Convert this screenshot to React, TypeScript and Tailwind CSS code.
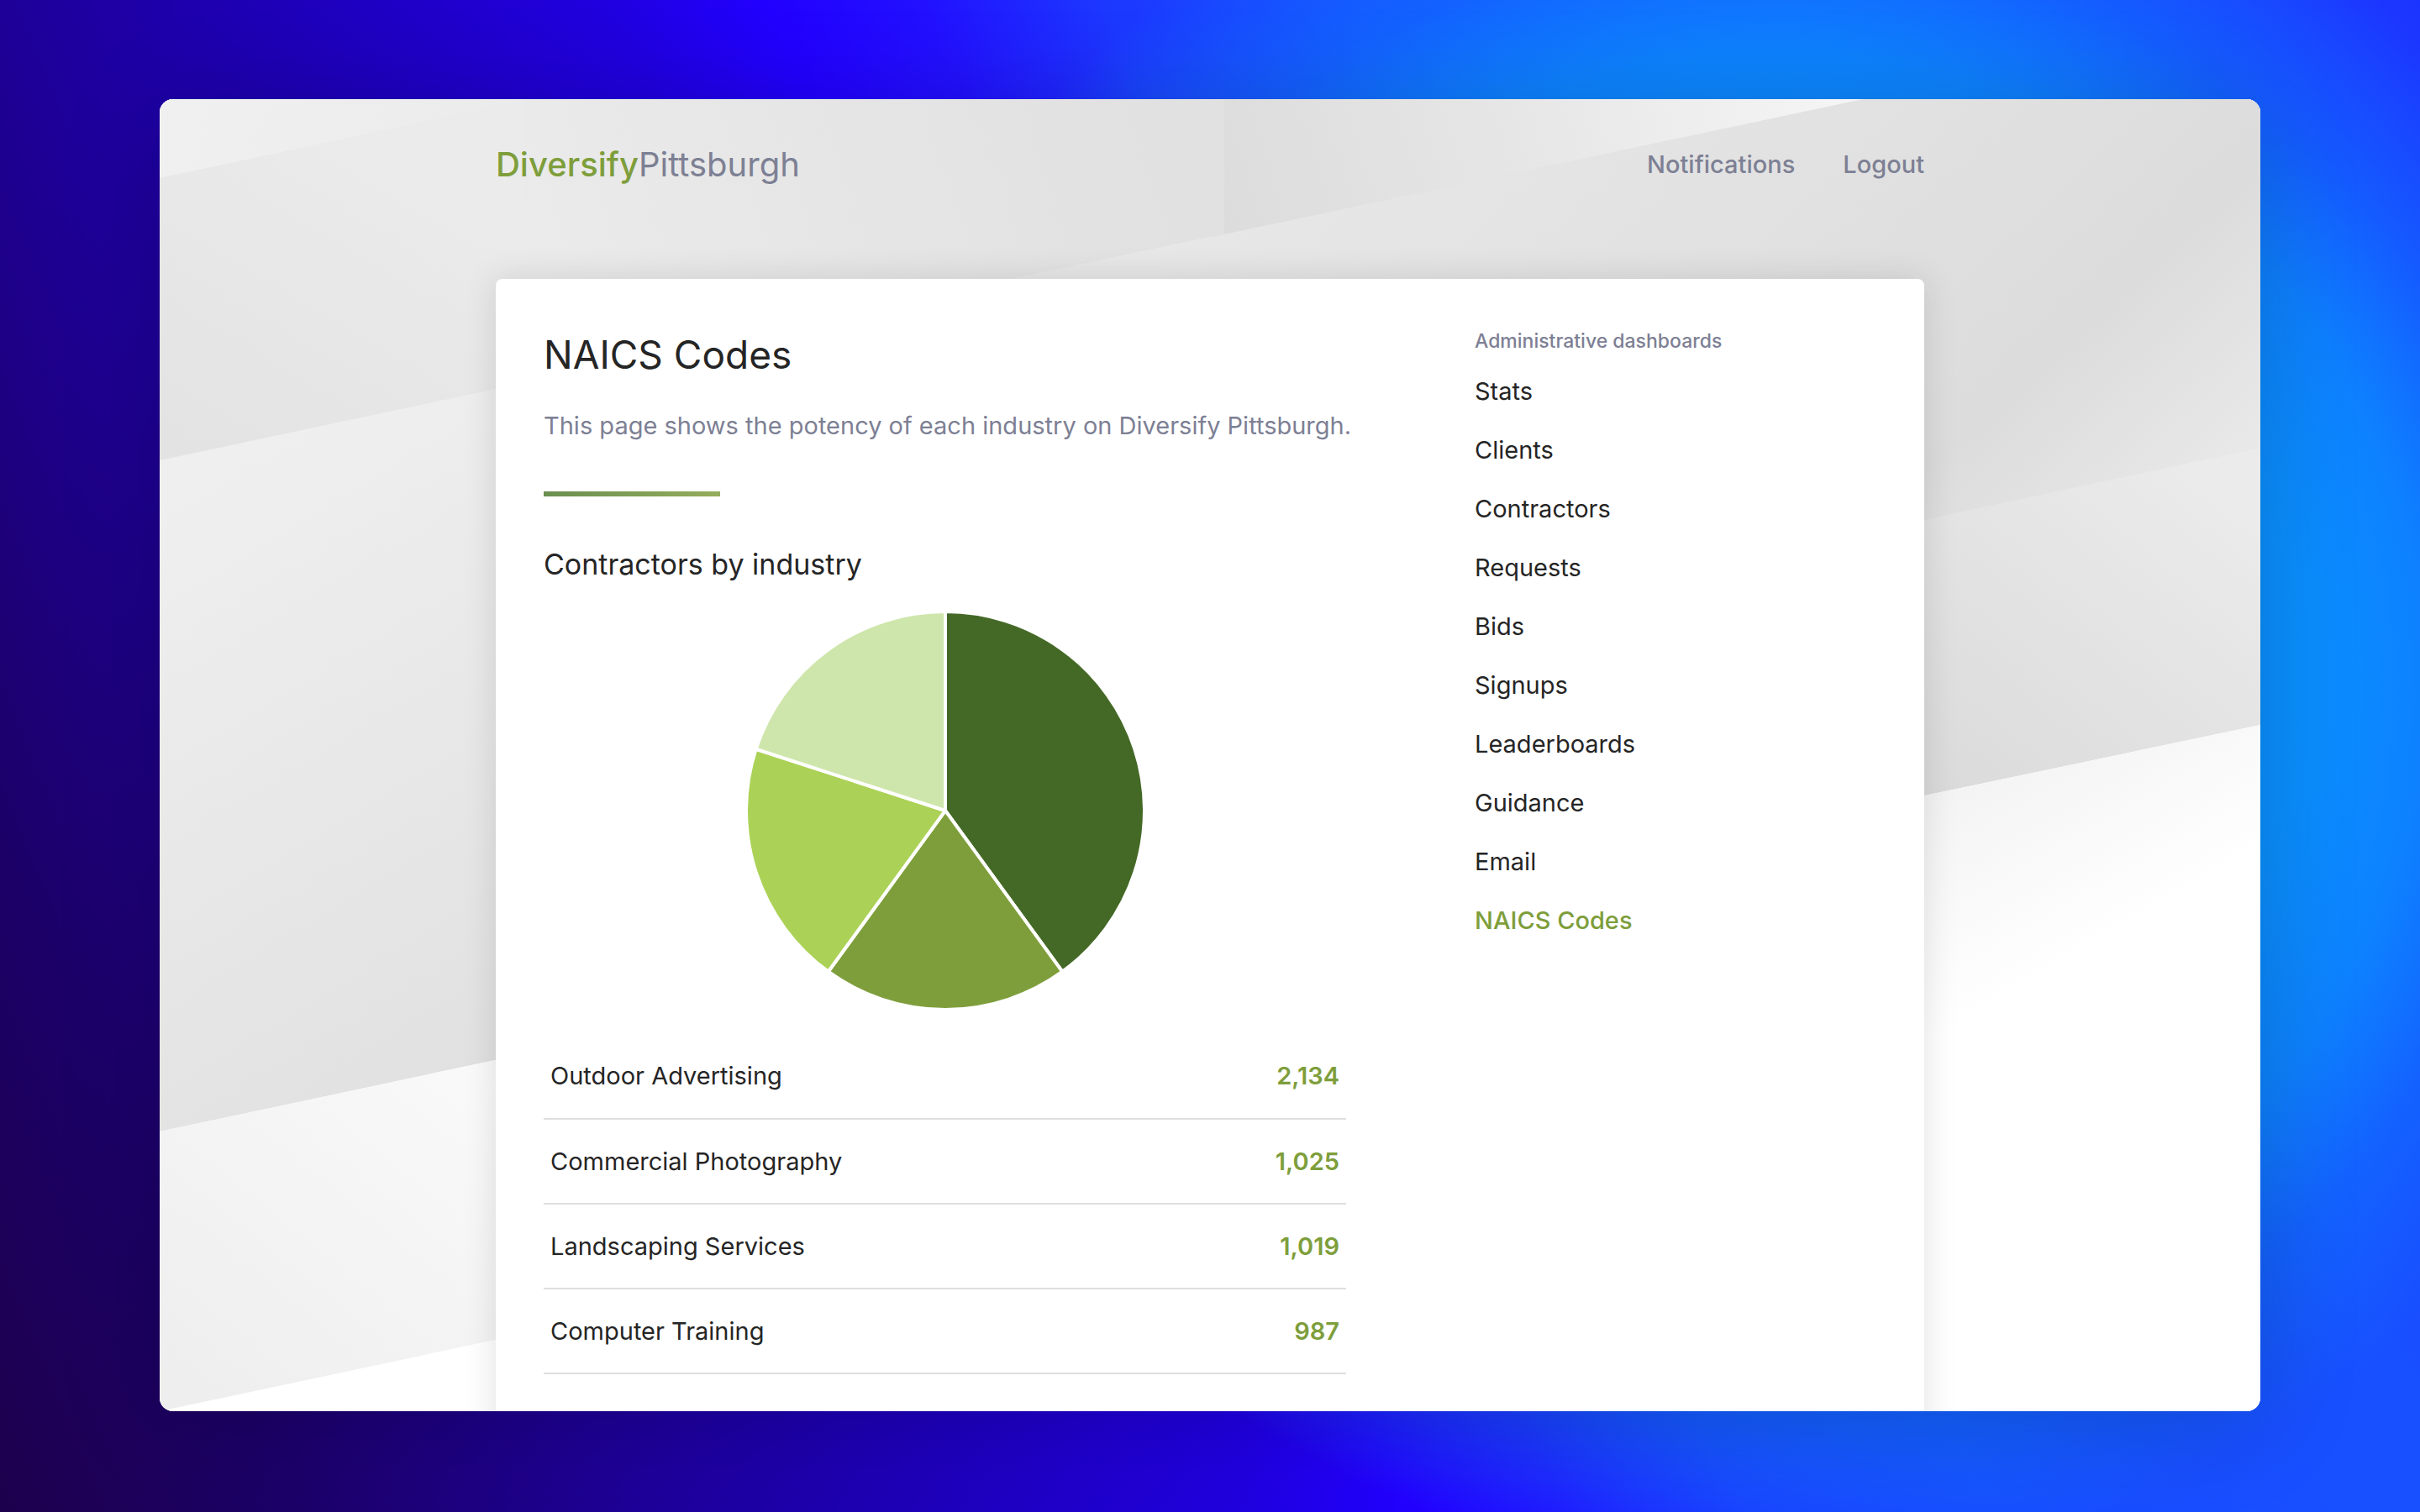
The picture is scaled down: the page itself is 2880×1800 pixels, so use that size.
const slices = [
  { value: 2, color: '#446926' },
  { value: 1, color: '#7e9e3b' },
  { value: 1, color: '#abd257' },
  { value: 1, color: '#cee6ab' },
];

const industries = [
  { name: 'Outdoor Advertising', count: '2,134' },
  { name: 'Commercial Photography', count: '1,025' },
  { name: 'Landscaping Services', count: '1,019' },
  { name: 'Computer Training', count: '987' },
];

const dashboards = [
  'Stats',
  'Clients',
  'Contractors',
  'Requests',
  'Bids',
  'Signups',
  'Leaderboards',
  'Guidance',
  'Email',
  'NAICS Codes',
];

function PieChart() {
  const total = slices.reduce((sum, slice) => sum + slice.value, 0);
  const point = (fraction: number) => {
    const angle = fraction * 2 * Math.PI - Math.PI / 2;
    return `${(237 * Math.cos(angle)).toFixed(2)} ${(237 * Math.sin(angle)).toFixed(2)}`;
  };
  let start = 0;
  return (
    <svg viewBox="-238 -238 476 476" className="mx-auto block size-[476px]" role="img" aria-label="Contractors by industry">
      {slices.map((slice) => {
        const from = start / total;
        start += slice.value;
        const to = start / total;
        const large = to - from > 0.5 ? 1 : 0;
        return (
          <path
            key={slice.color}
            d={`M0 0 L${point(from)} A237 237 0 ${large} 1 ${point(to)} Z`}
            fill={slice.color}
            stroke="#fff"
            strokeWidth="4"
            strokeLinejoin="round"
          />
        );
      })}
    </svg>
  );
}

// Skewed grey bands behind the page content.
function Backdrop() {
  return (
    <svg viewBox="0 0 2500 1562" preserveAspectRatio="none" className="absolute inset-0 size-full" aria-hidden="true">
      <defs>
        <linearGradient id="topLeft" gradientUnits="userSpaceOnUse" x1="0" y1="0" x2="435" y2="100">
          <stop offset="0" stopColor="#f0f0f0" />
          <stop offset="1" stopColor="#ebebeb" />
        </linearGradient>
        <linearGradient id="leftBand" gradientUnits="userSpaceOnUse" x1="60" y1="430" x2="280" y2="60">
          <stop offset="0" stopColor="#e3e3e3" />
          <stop offset="0.5" stopColor="#e7e7e7" />
          <stop offset="1" stopColor="#ebebeb" />
        </linearGradient>
        <linearGradient id="midBand" gradientUnits="userSpaceOnUse" x1="435" y1="250" x2="1150" y2="0">
          <stop offset="0" stopColor="#ebebeb" />
          <stop offset="0.5" stopColor="#e6e6e6" />
          <stop offset="1" stopColor="#e1e1e1" />
        </linearGradient>
        <linearGradient id="wedge" gradientUnits="userSpaceOnUse" x1="1267" y1="160" x2="1960" y2="-60">
          <stop offset="0" stopColor="#dcdcdc" />
          <stop offset="0.5" stopColor="#e6e6e6" />
          <stop offset="1" stopColor="#f4f4f4" />
        </linearGradient>
        <linearGradient id="rightBand" gradientUnits="userSpaceOnUse" x1="646" y1="694" x2="1374" y2="1475">
          <stop offset="0" stopColor="#e7e7e7" />
          <stop offset="0.45" stopColor="#e1e1e1" />
          <stop offset="0.76" stopColor="#dcdcdc" />
          <stop offset="1" stopColor="#e9e9e9" />
        </linearGradient>
        <linearGradient id="rightLower" gradientUnits="userSpaceOnUse" x1="2420" y1="430" x2="2100" y2="830">
          <stop offset="0" stopColor="#ebebeb" />
          <stop offset="1" stopColor="#dadada" />
        </linearGradient>
        <linearGradient id="leftLower" gradientUnits="userSpaceOnUse" x1="0" y1="480" x2="400" y2="1140">
          <stop offset="0" stopColor="#efefef" />
          <stop offset="0.5" stopColor="#e8e8e8" />
          <stop offset="1" stopColor="#e1e1e1" />
        </linearGradient>
        <linearGradient id="leftPale" gradientUnits="userSpaceOnUse" x1="400" y1="1140" x2="60" y2="1560">
          <stop offset="0" stopColor="#fafafa" />
          <stop offset="1" stopColor="#eeeeee" />
        </linearGradient>
        <linearGradient id="rightPale" gradientUnits="userSpaceOnUse" x1="825" y1="1435" x2="1008" y2="1754">
          <stop offset="0" stopColor="#eeeeee" />
          <stop offset="1" stopColor="#ffffff" />
        </linearGradient>
      </defs>
      <rect width="2500" height="1562" fill="#fff" />
      <path d="M0 0H2500V700L0 1200Z" fill="#e4e4e4" />
      <path d="M0 0H435V2L0 94Z" fill="url(#topLeft)" />
      <path d="M0 94L435 2V337L0 430Z" fill="url(#leftBand)" />
      <path d="M435 0H1267V161L435 338Z" fill="url(#midBand)" />
      <path d="M1267 0H2028L1267 161Z" fill="url(#wedge)" />
      <path d="M2500 415V745L1250 1008V680Z" fill="url(#rightLower)" />
      <path d="M0 430L1250 164V963L0 1229Z" fill="url(#leftLower)" />
      <path d="M900 239L2028 0H2500V415L900 759Z" fill="url(#rightBand)" />
      <path d="M0 1229L1250 963V1296L0 1562Z" fill="url(#leftPale)" />
      <path d="M2500 745V1031L1250 1296V1008Z" fill="url(#rightPale)" />
    </svg>
  );
}

export default function App() {
  return (
    <div className="flex h-screen flex-col overflow-hidden bg-[radial-gradient(ellipse_39%_59%_at_73%_45%,#0a90ff_0%,#0a90ff_56%,#0c88ffe6_70%,#1070ff99_83%,#1850ff00_100%),linear-gradient(67deg,#1d004c_0%,#1c006a_10%,#1e0098_21%,#1e00b8_30%,#2000e0_41%,#2200ff_46%,#2210ff_51%,#1c38ff_57%,#184cff_65%,#1850ff_80%,#1c34ff_100%)] px-[190px] pt-[118px] pb-[120px] font-['Inter',sans-serif] text-[29px] leading-[48px] text-[#252525]">
      <div className="relative min-h-0 flex-1 overflow-hidden rounded-2xl bg-white shadow-[0_10px_120px_rgba(0,0,0,0.2)]">
        <Backdrop />
        <div className="relative mx-auto w-[68%]">
          <header className="flex h-[214px] items-start justify-between pt-[54px] text-[#7d8094]">
            <a href="#home" className="text-[40px]">
              <span className="font-medium text-[#7e9e3b]">Diversify</span>
              <span>Pittsburgh</span>
            </a>
            <nav className="flex gap-[57px] font-medium">
              <a href="#notifications">Notifications</a>
              <a href="#logout">Logout</a>
            </nav>
          </header>
          <main className="flex min-h-[1500px] items-start justify-between rounded-lg bg-white p-[57px] shadow-[0_0_40px_rgba(0,0,0,0.12)]">
            <section className="w-[955px]">
              <h1 className="text-[46px] leading-[66px]">NAICS Codes</h1>
              <p className="mt-7 whitespace-nowrap text-[#7d8094]">This page shows the potency of each industry on Diversify Pittsburgh.</p>
              <div className="mt-[54px] h-[6px] w-[210px] bg-linear-to-r from-[#6a8f50] to-[#94ad5c]" />
              <h2 className="mt-14 text-[34px] leading-[50px]">Contractors by industry</h2>
              <div className="mt-[30px]">
                <PieChart />
              </div>
              <table className="mt-7 w-full">
                <tbody>
                  {industries.map((industry) => (
                    <tr key={industry.name} className="h-[101px] border-b-2 border-[#dfdfdf]">
                      <th scope="row" className="pl-2 text-left font-normal">{industry.name}</th>
                      <td className="pr-2 text-right font-semibold text-[#7e9e3b]">{industry.count}</td>
                    </tr>
                  ))}
                </tbody>
              </table>
            </section>
            <aside className="w-[478px]">
              <h3 className="text-[23px] leading-[34px] font-medium text-[#7d8094]">Administrative dashboards</h3>
              <ul className="mt-2">
                {dashboards.map((name) => (
                  <li key={name} className="flex h-[70px] items-center">
                    <a href={`#${name}`} className={name === 'NAICS Codes' ? 'font-medium text-[#7e9e3b]' : ''}>{name}</a>
                  </li>
                ))}
              </ul>
            </aside>
          </main>
        </div>
      </div>
    </div>
  );
}
